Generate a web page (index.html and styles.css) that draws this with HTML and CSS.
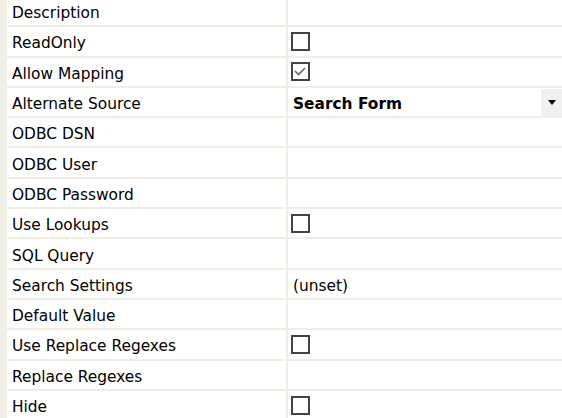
FILE: index.html
```html
<!DOCTYPE html>
<html>
<head>
<meta charset="utf-8">
<link rel="stylesheet" href="styles.css">
</head>
<body>
<div class="grid">
  <div class="gutter"></div>
  <div class="rows">
    <div class="row"><div class="label">Description</div><div class="value"></div></div>
    <div class="row"><div class="label">ReadOnly</div><div class="value"><span class="cb"></span></div></div>
    <div class="row"><div class="label">Allow Mapping</div><div class="value"><span class="cb"><svg width="15" height="15" viewBox="0 0 15 15"><polyline points="2,7 5.5,10.5 12,4" fill="none" stroke="#666" stroke-width="1.6"/></svg></span></div></div>
    <div class="row"><div class="label">Alternate Source</div><div class="value sel"><span class="bold txt">Search Form</span><span class="btn"><span class="tri"></span></span></div></div>
    <div class="row"><div class="label">ODBC DSN</div><div class="value"></div></div>
    <div class="row"><div class="label">ODBC User</div><div class="value"></div></div>
    <div class="row"><div class="label">ODBC Password</div><div class="value"></div></div>
    <div class="row"><div class="label">Use Lookups</div><div class="value"><span class="cb"></span></div></div>
    <div class="row"><div class="label">SQL Query</div><div class="value"></div></div>
    <div class="row"><div class="label">Search Settings</div><div class="value"><span class="txt">(unset)</span></div></div>
    <div class="row"><div class="label">Default Value</div><div class="value"></div></div>
    <div class="row"><div class="label">Use Replace Regexes</div><div class="value"><span class="cb"></span></div></div>
    <div class="row"><div class="label">Replace Regexes</div><div class="value"></div></div>
    <div class="row"><div class="label">Hide</div><div class="value"><span class="cb"></span></div></div>
  </div>
</div>
</body>
</html>
```

FILE: styles.css
```css
html, body {
  margin: 0;
  padding: 0;
  background: #ffffff;
  overflow: hidden;
}
body {
  font-family: "DejaVu Sans", Tahoma, sans-serif;
  font-size: 15.4px;
  color: #000;
}
.grid {
  display: flex;
  margin-top: -3px;
}
.gutter {
  width: 7px;
  flex: none;
  background: #f0efe5;
}
.rows {
  flex: 1;
  display: flex;
  flex-direction: column;
}
.row {
  display: grid;
  grid-template-columns: 281px 1fr;
  height: 30.3px;
  box-sizing: border-box;
  border-bottom: 2px solid #f1efe3;
}
.label {
  display: flex;
  align-items: center;
  padding-left: 5px;
  padding-top: 4px;
  border-right: 2px solid #f1efe3;
  white-space: nowrap;
}
.value {
  display: flex;
  align-items: center;
  padding-left: 5px;
  white-space: nowrap;
}
.txt {
  padding-top: 4px;
}
.cb {
  width: 19px;
  height: 19px;
  box-sizing: border-box;
  border: 2px solid #444;
  background: #fff;
  display: flex;
  align-items: center;
  justify-content: center;
  margin-left: -2px;
}
.sel {
  justify-content: space-between;
  padding-right: 0;
}
.bold {
  font-weight: bold;
}
.btn {
  width: 21px;
  height: 27px;
  background: #f0f0f0;
  display: flex;
  align-items: center;
  justify-content: center;
}
.tri {
  width: 0;
  height: 0;
  border-left: 4px solid transparent;
  border-right: 4px solid transparent;
  border-top: 5px solid #000;
}
```
